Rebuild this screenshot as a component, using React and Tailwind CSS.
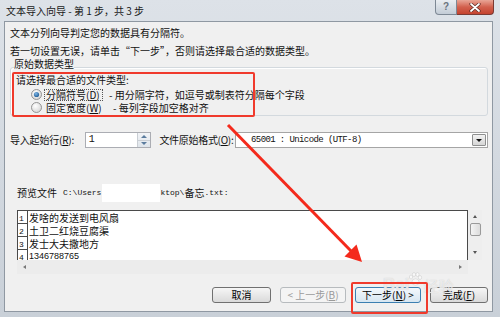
import React from 'react';

// 文本导入向导 dialog (Win7 look), annotated with red marks
const cjk = "font-['Noto_Sans_CJK_SC','Liberation_Sans',sans-serif]";
const mono = "font-['Liberation_Mono',monospace]";

const Radio = ({ id, checked }) => (
  <svg width="11" height="11" viewBox="0 0 11 11" className="shrink-0">
    <defs>
      <radialGradient id={`rb-${id}`} cx="40%" cy="35%" r="70%">
        <stop offset="0%" stopColor="#ffffff" />
        <stop offset="100%" stopColor="#d4d4d4" />
      </radialGradient>
      <radialGradient id={`rd-${id}`} cx="40%" cy="35%" r="70%">
        <stop offset="0%" stopColor="#7fb6e6" />
        <stop offset="100%" stopColor="#1d5a93" />
      </radialGradient>
    </defs>
    <circle cx="5.5" cy="5.5" r="5" fill={`url(#rb-${id})`} stroke="#8c8c8c" strokeWidth="0.9" />
    {checked && <circle cx="5.5" cy="5.5" r="2.6" fill={`url(#rd-${id})`} />}
  </svg>
);

const Btn = ({ className, kind, children }) => {
  const look =
    kind === 'disabled'
      ? 'border-[#b7bbbe] bg-[#f4f4f4] text-[#9a9a9a]'
      : kind === 'focus'
      ? 'border-[#3c7fb1] bg-gradient-to-b from-[#f3f8fc] to-[#d7e6f1] text-black'
      : 'border-[#707070] bg-gradient-to-b from-[#f6f6f6] to-[#dadada] text-black';
  return (
    <div className={`h-[16px] rounded-[3px] border flex items-center justify-center text-[10px] leading-none whitespace-nowrap ${look} ${className}`}>
      {children}
    </div>
  );
};

const rows = ['发啥的发送到电风扇', '土卫二红烧豆腐渠', '发士大夫撒地方', '1346788765'];

export default function App() {
  return (
    <div className={`relative w-[500px] h-[317px] overflow-hidden flex flex-col bg-gradient-to-b from-[#dde2e8] to-[#c9d0d8] text-[#111] ${cjk}`}>
      {/* title bar */}
      <div className="h-[21px] shrink-0 flex items-start">
        <span className="pl-[6px] pt-[5px] text-[10px] leading-[12px] text-[#1a1a1a]">文本导入向导 - 第 1 步，共 3 步</span>
        <div className="ml-auto mr-[6px] flex">
          <div className="w-[22px] h-[15px] rounded-bl-[4px] border border-t-0 border-[#7d8894] bg-gradient-to-b from-[#e9edf1] to-[#c3ccd6] flex items-center justify-center text-[10px] leading-none text-[#6a737d] font-['Liberation_Sans',sans-serif] font-bold">?</div>
          <div className="w-[37px] h-[15px] rounded-br-[4px] border border-t-0 border-l-0 border-[#7b3a33] bg-gradient-to-b from-[#e8a596] via-[#d2604d] to-[#c4432f] flex items-center justify-center">
            <svg width="12" height="9" viewBox="0 0 12 9">
              <path d="M2 1 L10 8 M10 1 L2 8" stroke="#5a2a24" strokeWidth="3.2" strokeLinecap="round" />
              <path d="M2 1 L10 8 M10 1 L2 8" stroke="#ffffff" strokeWidth="1.8" strokeLinecap="round" />
            </svg>
          </div>
        </div>
      </div>

      {/* client area */}
      <div className="ml-[4px] mr-[7px] mb-[5px] flex-1 flex flex-col bg-[#f0f0f0] border border-[#8f98a2] pl-[5px] pr-[4px]">
        <p className="mt-[2px] text-[10px] leading-[18px]">文本分列向导判定您的数据具有分隔符。</p>
        <p className="mt-[1px] text-[10px] leading-[16px]">若一切设置无误，请单击“下一步”，否则请选择最合适的数据类型。</p>

        <fieldset className="border border-[#d3d9de] rounded-[3px] px-[5px] pb-[1px] shadow-[inset_1px_1px_0_#ffffff]">
          <legend className="ml-[-2px] pb-[6px] text-[10px] leading-[10px]">原始数据类型</legend>
          <p className="mt-[-1px] text-[10px] leading-[12px]">请选择最合适的文件类型:</p>
          <div className="mt-[2px] h-[13px] flex items-center pl-[15px] text-[10px] leading-none">
            <Radio id="a" checked />
            <span className="ml-[2px] w-[59px] h-[12px] border border-dotted border-[#555] flex items-center pl-[1px] whitespace-nowrap">
              分隔符号(<u>D</u>)
            </span>
            <span className="ml-[6px] whitespace-nowrap">- 用分隔字符，如逗号或制表符分隔每个字段</span>
          </div>
          <div className="h-[13px] flex items-center pl-[15px] text-[10px] leading-none">
            <Radio id="b" />
            <span className="ml-[2px] w-[59px] pl-[2px] whitespace-nowrap">固定宽度(<u>W</u>)</span>
            <span className="ml-[10px] whitespace-nowrap">- 每列字段加空格对齐</span>
          </div>
        </fieldset>

        {/* start row + encoding */}
        <div className="mt-[16px] h-[16px] flex items-center text-[10px] leading-none whitespace-nowrap">
          <span className="w-[75px] tracking-[-0.2px]">导入起始行(<u>R</u>):</span>
          <div className="w-[67px] h-[16px] flex border border-[#abadb3] bg-white">
            <span className={`flex-1 pl-[3px] leading-[14px] text-[10px] ${mono}`}>1</span>
            <div className="w-[13px] flex flex-col border-l border-[#c9ced4] bg-gradient-to-b from-[#f2f4f7] to-[#dfe5eb]">
              <div className="flex-1 flex items-center justify-center border-b border-[#c9ced4]">
                <div className="w-0 h-0 border-l-[3px] border-r-[3px] border-b-[3px] border-l-transparent border-r-transparent border-b-[#5b7c9e]" />
              </div>
              <div className="flex-1 flex items-center justify-center">
                <div className="w-0 h-0 border-l-[3px] border-r-[3px] border-t-[3px] border-l-transparent border-r-transparent border-t-[#5b7c9e]" />
              </div>
            </div>
          </div>
          <span className="ml-[8px] w-[76px] tracking-[-0.3px]">文件原始格式(<u>O</u>):</span>
          <div className="w-[254px] h-[16px] flex border border-[#a5a5a5] bg-white">
            <span className={`flex-1 pl-[15px] text-[9px] leading-[14px] tracking-[-0.6px] ${mono}`}>65001 : Unicode (UTF-8)</span>
            <div className="w-[14px] m-[1px] border border-[#8e8f8f] rounded-[1px] bg-gradient-to-b from-[#f2f2f2] to-[#d6d6d6] flex items-center justify-center">
              <div className="w-0 h-0 border-l-[3px] border-r-[3px] border-t-[3px] border-l-transparent border-r-transparent border-t-[#111]" />
            </div>
          </div>
        </div>

        {/* preview label */}
        <div className="mt-[36px] ml-[7px] h-[18px] flex items-center text-[10px] leading-none">
          <span>预览文件</span>
          <span className={`ml-[6px] text-[8px] ${mono}`}>{'C:\\Users'}</span>
          <span className="ml-[1px] w-[58px] h-[18px] bg-white" />
          <span className={`text-[8px] ${mono}`}>ktop\</span>
          <span>备忘</span>
          <span className={`text-[8px] ${mono}`}>.txt:</span>
        </div>

        {/* preview box */}
        <div className="mt-[8px] ml-[7px] w-[465px] h-[64px] flex flex-col">
          <div className="h-[50px] flex">
            <div className="flex-1 border-l border-t border-r border-[#4a4a4a] bg-white overflow-hidden">
              {rows.map((r, i) => (
                <div key={i} className="flex h-[13px] shrink-0">
                  <div className={`w-[10px] border-r border-b border-[#4a4a4a] text-[8px] leading-none flex items-end pl-[1px] ${mono}`}>{i + 1}</div>
                  <div className={i === 3 ? "pl-[1px] text-[9px] leading-[12px] font-['Liberation_Sans',sans-serif]" : 'pl-[1px] text-[10px] leading-[13px]'}>{r}</div>
                </div>
              ))}
            </div>
            <div className="w-[14px] flex flex-col items-center bg-[#eeeeee]">
              <div className="mt-[5px] w-0 h-0 border-l-[2.5px] border-r-[2.5px] border-b-[3px] border-l-transparent border-r-transparent border-b-[#555]" />
              <div className="mt-[5px] w-[11px] h-[13px] rounded-[2px] border border-[#9a9a9a] bg-gradient-to-r from-[#f4f4f4] to-[#dcdcdc]" />
              <div className="mt-auto mb-[6px] w-0 h-0 border-l-[2.5px] border-r-[2.5px] border-t-[3px] border-l-transparent border-r-transparent border-t-[#555]" />
            </div>
          </div>
          <div className="h-[14px] flex">
            <div className="flex-1 flex items-center bg-[#ececec] px-[6px]">
              <div className="w-0 h-0 border-t-[2.5px] border-b-[2.5px] border-r-[3px] border-t-transparent border-b-transparent border-r-[#777]" />
              <div className="ml-auto w-0 h-0 border-t-[2.5px] border-b-[2.5px] border-l-[3px] border-t-transparent border-b-transparent border-l-[#777]" />
            </div>
            <div className="w-[14px] bg-[#f0f0f0]" />
          </div>
        </div>

        {/* buttons */}
        <div className="mt-[13px] flex justify-end gap-[9px]">
          <Btn className="w-[59px]">取消</Btn>
          <Btn className="w-[66px]" kind="disabled">&lt; 上一步(<u>B</u>)</Btn>
          <Btn className="w-[66px]" kind="focus">下一步(<u>N</u>) &gt;</Btn>
          <Btn className="w-[58px]">完成(<u>F</u>)</Btn>
        </div>
      </div>

      {/* baidu watermark */}
      <div className="absolute left-[383px] top-[271px] flex items-end text-white/60 pointer-events-none [text-shadow:0_0_1px_#c4c4c4]">
        <span className="text-[17px] leading-none font-['Liberation_Sans',sans-serif] font-bold">Bai</span>
        <svg width="16" height="16" viewBox="0 0 16 16" className="mb-[6px] -ml-[2px]">
          <g fill="#ffffff" fillOpacity="0.6" stroke="#c8c8c8" strokeWidth="0.5">
            <ellipse cx="4" cy="6" rx="1.6" ry="2" />
            <ellipse cx="7" cy="3.5" rx="1.6" ry="2" />
            <ellipse cx="10.5" cy="3.5" rx="1.6" ry="2" />
            <ellipse cx="13" cy="6.5" rx="1.6" ry="2" />
            <ellipse cx="8.5" cy="11" rx="3.6" ry="3.2" />
          </g>
        </svg>
        <span className="text-[15px] leading-none">经验</span>
      </div>

      {/* red annotations */}
      <div className="absolute left-[12px] top-[72px] w-[243px] h-[45px] border-2 border-[#f03a2c] rounded-[2px] pointer-events-none" />
      <div className="absolute left-[351px] top-[282px] w-[77px] h-[32px] border-2 border-[#f03a2c] rounded-[2px] pointer-events-none" />
      <svg className="absolute left-0 top-0 pointer-events-none" width="500" height="317" viewBox="0 0 500 317">
        <line x1="228" y1="125" x2="352" y2="252" stroke="#f42a1c" strokeWidth="3" />
        <polygon points="362,262 344.5,256.5 356.5,244.5" fill="#f42a1c" />
      </svg>
    </div>
  );
}
